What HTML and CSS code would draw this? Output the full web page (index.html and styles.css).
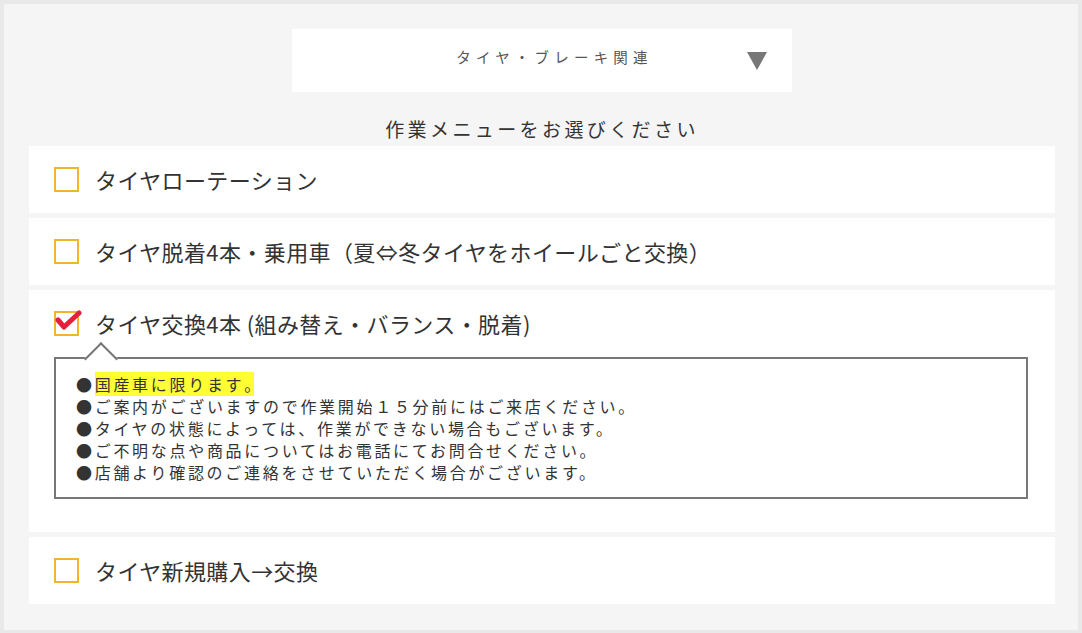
FILE: index.html
```html
<!DOCTYPE html>
<html lang="ja">
<head>
<meta charset="utf-8">
<title>作業メニュー</title>
<link rel="stylesheet" href="styles.css">
</head>
<body>
<div class="page">
  <div class="select">
    <span class="select-label">タイヤ・ブレーキ関連</span>
    <svg class="select-arrow" width="20" height="18" viewBox="0 0 20 18"><polygon points="0,0 20,0 10,18" fill="#777"/></svg>
  </div>
  <h2 class="heading">作業メニューをお選びください</h2>
  <ul class="menu">
    <li class="item">
      <div class="row"><span class="box"></span><span class="label">タイヤローテーション</span></div>
    </li>
    <li class="item">
      <div class="row"><span class="box"></span><span class="label">タイヤ脱着4本・乗用車（夏⇔冬タイヤをホイールごと交換）</span></div>
    </li>
    <li class="item item-open">
      <div class="row">
        <span class="box box-checked">
          <svg class="check" width="30" height="24" viewBox="0 0 30 24"><polyline points="3,10 9,17 24,3" fill="none" stroke="#e5203c" stroke-width="5" stroke-linecap="round" stroke-linejoin="round"/></svg>
        </span>
        <span class="label">タイヤ交換4本 (組み替え・バランス・脱着)</span>
      </div>
      <div class="note">
        <p>●<mark class="hl">国産車に限ります<span class="last">。</span></mark></p>
        <p>●ご案内がございますので作業開始１５分前にはご来店ください。</p>
        <p>●タイヤの状態によっては、作業ができない場合もございます。</p>
        <p>●ご不明な点や商品についてはお電話にてお問合せください。</p>
        <p>●店舗より確認のご連絡をさせていただく場合がございます。</p>
      </div>
    </li>
    <li class="item">
      <div class="row"><span class="box"></span><span class="label">タイヤ新規購入→交換</span></div>
    </li>
  </ul>
</div>
</body>
</html>
```

FILE: styles.css
```css
* { box-sizing: border-box; }
html, body { margin: 0; padding: 0; }
body {
  width: 1082px;
  height: 633px;
  border: 4px solid #e9e9e9;
  border-bottom-width: 3px;
  background: #f5f5f5;
  font-family: "Noto Sans CJK JP", "Noto Sans", sans-serif;
  color: #333;
  overflow: hidden;
}
.page {
  padding: 25px 23px 0 25px;
}
.select {
  width: 500px;
  height: 63px;
  margin: 0 auto;
  background: #fff;
  display: flex;
  align-items: center;
  padding: 0 25px 0 70px;
}
.select-label {
  flex: 1;
  text-align: center;
  font-size: 14.5px;
  letter-spacing: 5.2px;
  color: #555;
  padding-bottom: 9px;
}
.select-arrow { display: block; flex: none; }
.heading {
  margin: 24px 0 4px;
  font-weight: normal;
  font-size: 19px;
  line-height: 26px;
  letter-spacing: 3.4px;
  text-align: center;
  color: #333;
}
.menu {
  list-style: none;
  margin: 0;
  padding: 0;
  display: flex;
  flex-direction: column;
  gap: 5px;
}
.item {
  background: #fff;
  padding: 20px 27px 20px 25px;
}
.item-open { padding-bottom: 33px; }
.row {
  display: flex;
  align-items: center;
  height: 27px;
  gap: 16px;
}
.box {
  position: relative;
  flex: none;
  width: 25px;
  height: 25px;
  border: 2px solid #f0b62a;
}
.check {
  position: absolute;
  left: -1px;
  top: -3px;
}
.label {
  font-size: 22px;
  line-height: 27px;
  letter-spacing: 0.4px;
  color: #333;
}
.note {
  position: relative;
  margin-top: 20px;
  border: 2px solid #777;
  background: #fff;
  padding: 14px 20px;
}
.note::before {
  content: "";
  position: absolute;
  left: 33px;
  top: -12px;
  width: 22px;
  height: 22px;
  background: #fff;
  border-top: 2px solid #777;
  border-left: 2px solid #777;
  transform: rotate(45deg);
}
.note p {
  position: relative;
  margin: 0;
  font-size: 16px;
  line-height: 22px;
  letter-spacing: 2.7px;
  color: #333;
  white-space: nowrap;
}
.hl {
  background: #ffff33;
  color: #333;
}
.last {
  display: inline-block;
  width: 10px;
  letter-spacing: 0;
  overflow: visible;
}
```
